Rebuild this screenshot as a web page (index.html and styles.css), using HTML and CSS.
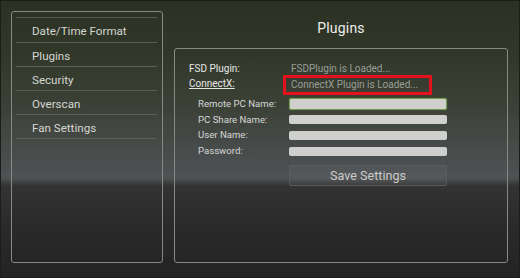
FILE: index.html
```html
<!DOCTYPE html>
<html lang="en">
<head>
  <meta charset="UTF-8">
  <title>Plugins</title>
  <link rel="stylesheet" href="styles.css">
</head>
<body>
  <div class="screen">
    <div class="menu-panel">
      <ul class="menu">
        <li>Date/Time Format</li>
        <li>Plugins</li>
        <li>Security</li>
        <li>Overscan</li>
        <li>Fan Settings</li>
      </ul>
    </div>

    <div class="main">
      <h1 class="title">Plugins</h1>
      <div class="content-panel">
        <div class="status">
          <span class="status-label">FSD Plugin:</span>
          <span class="status-value">FSDPlugin is Loaded...</span>
          <span class="status-label link">ConnectX:</span>
          <span class="status-value"><span class="highlight">ConnectX Plugin is Loaded...</span></span>
        </div>

        <!-- ConnectX Einstellungen -->
        <div class="form">
          <label>Remote PC Name:</label>
          <div class="field focused"></div>
          <label>PC Share Name:</label>
          <div class="field"></div>
          <label>User Name:</label>
          <div class="field"></div>
          <label>Password:</label>
          <div class="field"></div>
        </div>
        <button class="save">Save Settings</button>
      </div>
    </div>
  </div>
</body>
</html>
```

FILE: styles.css
```css
html, body {
  margin: 0;
  padding: 0;
}

body {
  width: 520px;
  height: 278px;
  overflow: hidden;
  font-family: Roboto, sans-serif;
  color: #d8d8d8;
}

.screen {
  box-sizing: border-box;
  width: 520px;
  height: 278px;
  border: 1px solid #1b1e17;
  padding: 10px 11px 14px 10px;
  display: flex;
  gap: 11px;
  background: linear-gradient(to bottom,
    #2b3123 0%,
    #323829 20%,
    #3c4137 38%,
    #464a48 52%,
    #4c5052 61%,
    #4f5355 64%,
    #333333 67%,
    #2b2b2b 80%,
    #232323 100%);
}

.menu-panel {
  width: 152px;
  box-sizing: border-box;
  border: 1px solid #858a83;
  border-radius: 3px;
  padding: 5px 5px 0 4px;
}

.menu {
  list-style: none;
  margin: 0;
  padding: 0;
  border-top: 1px solid #565b50;
}

.menu li {
  height: 23px;
  line-height: 26px;
  border-bottom: 1px solid #5a5f58;
  padding-left: 16px;
  font-size: 11.6px;
  color: #d4d6d2;
}

.menu li:first-child {
  height: 24px;
}

.main {
  flex: 1;
  display: flex;
  flex-direction: column;
}

.title {
  margin: 0;
  height: 37px;
  line-height: 34px;
  text-align: center;
  font-size: 14px;
  font-weight: normal;
  color: #ececec;
  letter-spacing: 0.2px;
}

.content-panel {
  flex: 1;
  border: 1px solid #858a83;
  border-radius: 3px;
  padding: 12px 0 0 14px;
}

.status {
  display: grid;
  grid-template-columns: 102px auto;
  font-size: 10px;
  line-height: 15px;
}

.status-label {
  color: #e6e6e6;
}

.link {
  text-decoration: underline;
}

.status-value {
  color: #9a9d98;
}

.highlight {
  display: inline-block;
  margin-left: -8px;
  padding: 0 11px 0 5px;
  line-height: 14px;
  border: 3px solid #e3121d;
  margin-top: -1px;
}

.form {
  display: grid;
  grid-template-columns: 91px 158px;
  align-items: center;
  row-gap: 5.7px;
  margin: 4px 0 0 9px;
  font-size: 9.6px;
  color: #d6d6d6;
}

.form label {
  line-height: 10px;
}

.field {
  height: 9px;
  border-radius: 2px;
  background: #cfd0ce;
}

.field.focused {
  height: 10px;
  border: 1px solid #6f9a4c;
  box-shadow: 0 0 1px #6f9a4c;
  margin: -1px 0;
}

.save {
  display: block;
  width: 158px;
  height: 21px;
  margin: 9px 0 0 100px;
  padding: 0;
  border: 1px solid #595b58;
  border-radius: 2px;
  background: rgba(255, 255, 255, 0.04);
  color: #cacaca;
  font-family: Roboto, sans-serif;
  font-size: 12.6px;
}
```
